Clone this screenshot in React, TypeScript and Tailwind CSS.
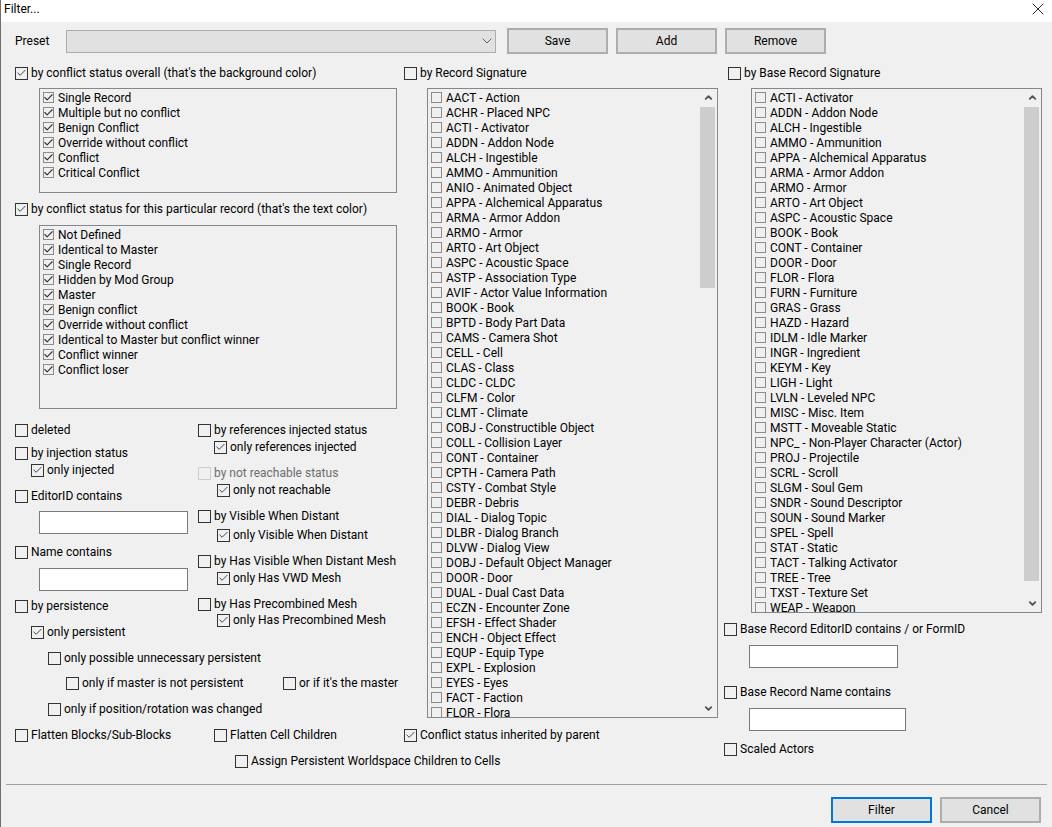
import React from 'react';
import { Check as CheckIcon, ChevronDown, ChevronUp, X } from 'lucide-react';

const overallItems = [
  'Single Record',
  'Multiple but no conflict',
  'Benign Conflict',
  'Override without conflict',
  'Conflict',
  'Critical Conflict',
];

const recordItems = [
  'Not Defined',
  'Identical to Master',
  'Single Record',
  'Hidden by Mod Group',
  'Master',
  'Benign conflict',
  'Override without conflict',
  'Identical to Master but conflict winner',
  'Conflict winner',
  'Conflict loser',
];

const signatures = [
  'AACT - Action', 'ACHR - Placed NPC', 'ACTI - Activator', 'ADDN - Addon Node', 'ALCH - Ingestible',
  'AMMO - Ammunition', 'ANIO - Animated Object', 'APPA - Alchemical Apparatus', 'ARMA - Armor Addon',
  'ARMO - Armor', 'ARTO - Art Object', 'ASPC - Acoustic Space', 'ASTP - Association Type',
  'AVIF - Actor Value Information', 'BOOK - Book', 'BPTD - Body Part Data', 'CAMS - Camera Shot',
  'CELL - Cell', 'CLAS - Class', 'CLDC - CLDC', 'CLFM - Color', 'CLMT - Climate',
  'COBJ - Constructible Object', 'COLL - Collision Layer', 'CONT - Container', 'CPTH - Camera Path',
  'CSTY - Combat Style', 'DEBR - Debris', 'DIAL - Dialog Topic', 'DLBR - Dialog Branch',
  'DLVW - Dialog View', 'DOBJ - Default Object Manager', 'DOOR - Door', 'DUAL - Dual Cast Data',
  'ECZN - Encounter Zone', 'EFSH - Effect Shader', 'ENCH - Object Effect', 'EQUP - Equip Type',
  'EXPL - Explosion', 'EYES - Eyes', 'FACT - Faction', 'FLOR - Flora',
];

const baseSignatures = [
  'ACTI - Activator', 'ADDN - Addon Node', 'ALCH - Ingestible', 'AMMO - Ammunition',
  'APPA - Alchemical Apparatus', 'ARMA - Armor Addon', 'ARMO - Armor', 'ARTO - Art Object',
  'ASPC - Acoustic Space', 'BOOK - Book', 'CONT - Container', 'DOOR - Door', 'FLOR - Flora',
  'FURN - Furniture', 'GRAS - Grass', 'HAZD - Hazard', 'IDLM - Idle Marker', 'INGR - Ingredient',
  'KEYM - Key', 'LIGH - Light', 'LVLN - Leveled NPC', 'MISC - Misc. Item', 'MSTT - Moveable Static',
  'NPC_ - Non-Player Character (Actor)', 'PROJ - Projectile', 'SCRL - Scroll', 'SLGM - Soul Gem',
  'SNDR - Sound Descriptor', 'SOUN - Sound Marker', 'SPEL - Spell', 'STAT - Static',
  'TACT - Talking Activator', 'TREE - Tree', 'TXST - Texture Set', 'WEAP - Weapon',
];

interface CheckProps {
  label: string;
  checked?: boolean;
  disabled?: boolean;
  className?: string;
}

const Check: React.FC<CheckProps> = ({ label, checked, disabled, className = '' }) => (
  <div className={`flex h-4 items-center whitespace-nowrap ${disabled ? 'text-[#6d6d6d]' : ''} ${className}`}>
    <span
      className={`mr-[3px] flex h-[13px] w-[13px] shrink-0 items-center justify-center border ${
        disabled ? 'border-[#cccccc]' : 'border-[#333333]'
      }`}
    >
      {checked && <CheckIcon className="h-[12px] w-[12px] text-[#333333]" strokeWidth={2} />}
    </span>
    {label}
  </div>
);

const ListRow: React.FC<{ label: string; checked?: boolean }> = ({ label, checked }) => (
  <div className="flex h-[15px] items-center whitespace-nowrap">
    <span className="mr-[4px] flex h-[11px] w-[11px] shrink-0 items-center justify-center border border-[#8c8c8c]">
      {checked && <CheckIcon className="h-[11px] w-[11px] shrink-0 text-[#333333]" strokeWidth={2.4} />}
    </span>
    {label}
  </div>
);

const ScrollBar: React.FC<{ thumbClass: string }> = ({ thumbClass }) => (
  <div className="flex w-[17px] shrink-0 flex-col">
    <div className="flex h-[17px] shrink-0 items-center justify-center">
      <ChevronUp className="h-[11px] w-[11px] text-[#505050]" strokeWidth={4} />
    </div>
    <div className="flex-1">
      <div className={`w-[15px] bg-[#cdcdcd] ${thumbClass}`} />
    </div>
    <div className="flex h-[17px] shrink-0 items-center justify-center">
      <ChevronDown className="h-[11px] w-[11px] text-[#505050]" strokeWidth={4} />
    </div>
  </div>
);

const Button: React.FC<{ label: string; className?: string }> = ({ label, className = '' }) => (
  <div className={`flex h-[26px] w-[101px] items-center justify-center border-2 bg-[#e1e1e1] ${className}`}>
    {label}
  </div>
);

const TextBox: React.FC<{ className: string }> = ({ className }) => (
  <div className={`h-[23px] border border-[#7a7a7a] bg-white ${className}`} />
);

export default function App() {
  return (
    <div className="flex h-[827px] w-[1052px] flex-col overflow-hidden border-l border-[#6e6e6e] bg-[#f0f0f0] font-['Roboto',sans-serif] text-[12px] leading-4 text-black">
      {/* Title bar */}
      <div className="flex h-[22px] shrink-0 items-center justify-between bg-white pl-[3px] pr-[4px]">
        <span className="-mt-[4px]">Filter...</span>
        <X className="-mt-[4px] h-[20px] w-[20px]" strokeWidth={1} />
      </div>

      {/* Preset row */}
      <div className="mt-[6px] flex h-[26px] shrink-0 items-center pl-[14px]">
        <span className="w-[51px]">Preset</span>
        <div className="flex h-[23px] w-[430px] items-center justify-end border border-[#adadad] bg-[#e1e1e1]">
          <ChevronDown className="h-4 w-4 text-[#404040]" strokeWidth={1.2} />
        </div>
        <Button label="Save" className="ml-[11px] border-[#adadad]" />
        <Button label="Add" className="ml-[8px] border-[#adadad]" />
        <Button label="Remove" className="ml-[8px] border-[#adadad]" />
      </div>

      {/* Main columns */}
      <div className="mt-[11px] flex shrink-0">
        {/* Left column */}
        <div className="ml-[14px] w-[389px] shrink-0">
          <Check checked label="by conflict status overall (that's the background color)" />
          <div className="ml-[24px] mt-[7px] h-[105px] w-[358px] border border-[#828790] pl-[3px] pt-[1px]">
            {overallItems.map((item) => (
              <ListRow key={item} label={item} checked />
            ))}
          </div>
          <Check checked label="by conflict status for this particular record  (that's the text color)" className="mt-[8px]" />
          <div className="ml-[24px] mt-[8px] h-[184px] w-[358px] border border-[#828790] pl-[3px] pt-[1px]">
            {recordItems.map((item) => (
              <ListRow key={item} label={item} checked />
            ))}
          </div>

          <div className="mt-[13px] flex">
            <div className="w-[183px] shrink-0">
              <Check label="deleted" />
              <Check label="by injection status" className="mt-[7px]" />
              <Check checked label="only injected" className="ml-4 mt-[1px]" />
              <Check label="EditorID contains" className="mt-[10px]" />
              <TextBox className="ml-[24px] mt-[7px] w-[149px]" />
              <Check label="Name contains" className="mt-[10px]" />
              <TextBox className="ml-[24px] mt-[8px] w-[149px]" />
              <Check label="by persistence" className="mt-[7px]" />
              <Check checked label="only persistent" className="ml-4 mt-[10px]" />
            </div>
            <div className="shrink-0">
              <Check label="by references injected status" />
              <Check checked label="only references injected" className="ml-4 mt-[1px]" />
              <Check disabled label="by not reachable status" className="mt-[10px]" />
              <Check checked label="only not reachable" className="ml-[19px] mt-[1px]" />
              <Check label="by Visible When Distant" className="mt-[10px]" />
              <Check checked label="only Visible When Distant" className="ml-[19px] mt-[3px]" />
              <Check label="by Has Visible When Distant Mesh" className="mt-[10px]" />
              <Check checked label="only Has VWD Mesh" className="ml-[19px] mt-[1px]" />
              <Check label="by Has Precombined Mesh" className="mt-[10px]" />
              <Check checked label="only Has Precombined Mesh" className="ml-[19px]" />
            </div>
          </div>

          <Check label="only possible unnecessary persistent" className="ml-[33px] mt-[10px]" />
          <div className="ml-[51px] mt-[9px] flex">
            <Check label="only if master is not persistent" className="w-[217px]" />
            <Check label="or if it's the master" />
          </div>
          <Check label="only if position/rotation was changed" className="ml-[33px] mt-[10px]" />
          <div className="mt-[10px] flex">
            <Check label="Flatten Blocks/Sub-Blocks" className="w-[199px]" />
            <Check label="Flatten Cell Children" />
          </div>
          <Check label="Assign Persistent Worldspace Children to Cells" className="ml-[220px] mt-[10px]" />
        </div>

        {/* Record signature column */}
        <div className="w-[320px] shrink-0">
          <Check label="by Record Signature" />
          <div className="ml-[23px] mt-[7px] flex h-[630px] w-[291px] border border-[#828790]">
            <div className="flex-1 overflow-hidden pl-[3px] pt-[1px]">
              {signatures.map((item) => (
                <ListRow key={item} label={item} />
              ))}
            </div>
            <ScrollBar thumbClass="h-[181px] mt-[1px]" />
          </div>
          <Check checked label="Conflict status inherited by parent" className="mt-[9px]" />
        </div>

        {/* Base record signature column */}
        <div className="flex-1">
          <Check label="by Base Record Signature" className="ml-1" />
          <div className="ml-[27px] mt-[7px] flex h-[525px] w-[291px] border border-[#828790]">
            <div className="flex-1 overflow-hidden pl-[3px] pt-[1px]">
              {baseSignatures.map((item) => (
                <ListRow key={item} label={item} />
              ))}
            </div>
            <ScrollBar thumbClass="h-[474px] mt-[1px]" />
          </div>
          <Check label="Base Record EditorID contains / or FormID" className="mt-[8px]" />
          <TextBox className="ml-[25px] mt-[8px] w-[149px]" />
          <Check label="Base Record Name contains" className="mt-[16px]" />
          <TextBox className="ml-[25px] mt-2 w-[157px]" />
          <Check label="Scaled Actors" className="mt-[10px]" />
        </div>
      </div>

      {/* Footer */}
      <div className="ml-[5px] mr-[5px] mt-[15px] h-px shrink-0 bg-[#a0a0a0]" />
      <div className="mt-[12px] flex shrink-0 justify-end gap-2 pr-[11px]">
        <Button label="Filter" className="border-[#0078d7]" />
        <Button label="Cancel" className="border-[#adadad]" />
      </div>
    </div>
  );
}
